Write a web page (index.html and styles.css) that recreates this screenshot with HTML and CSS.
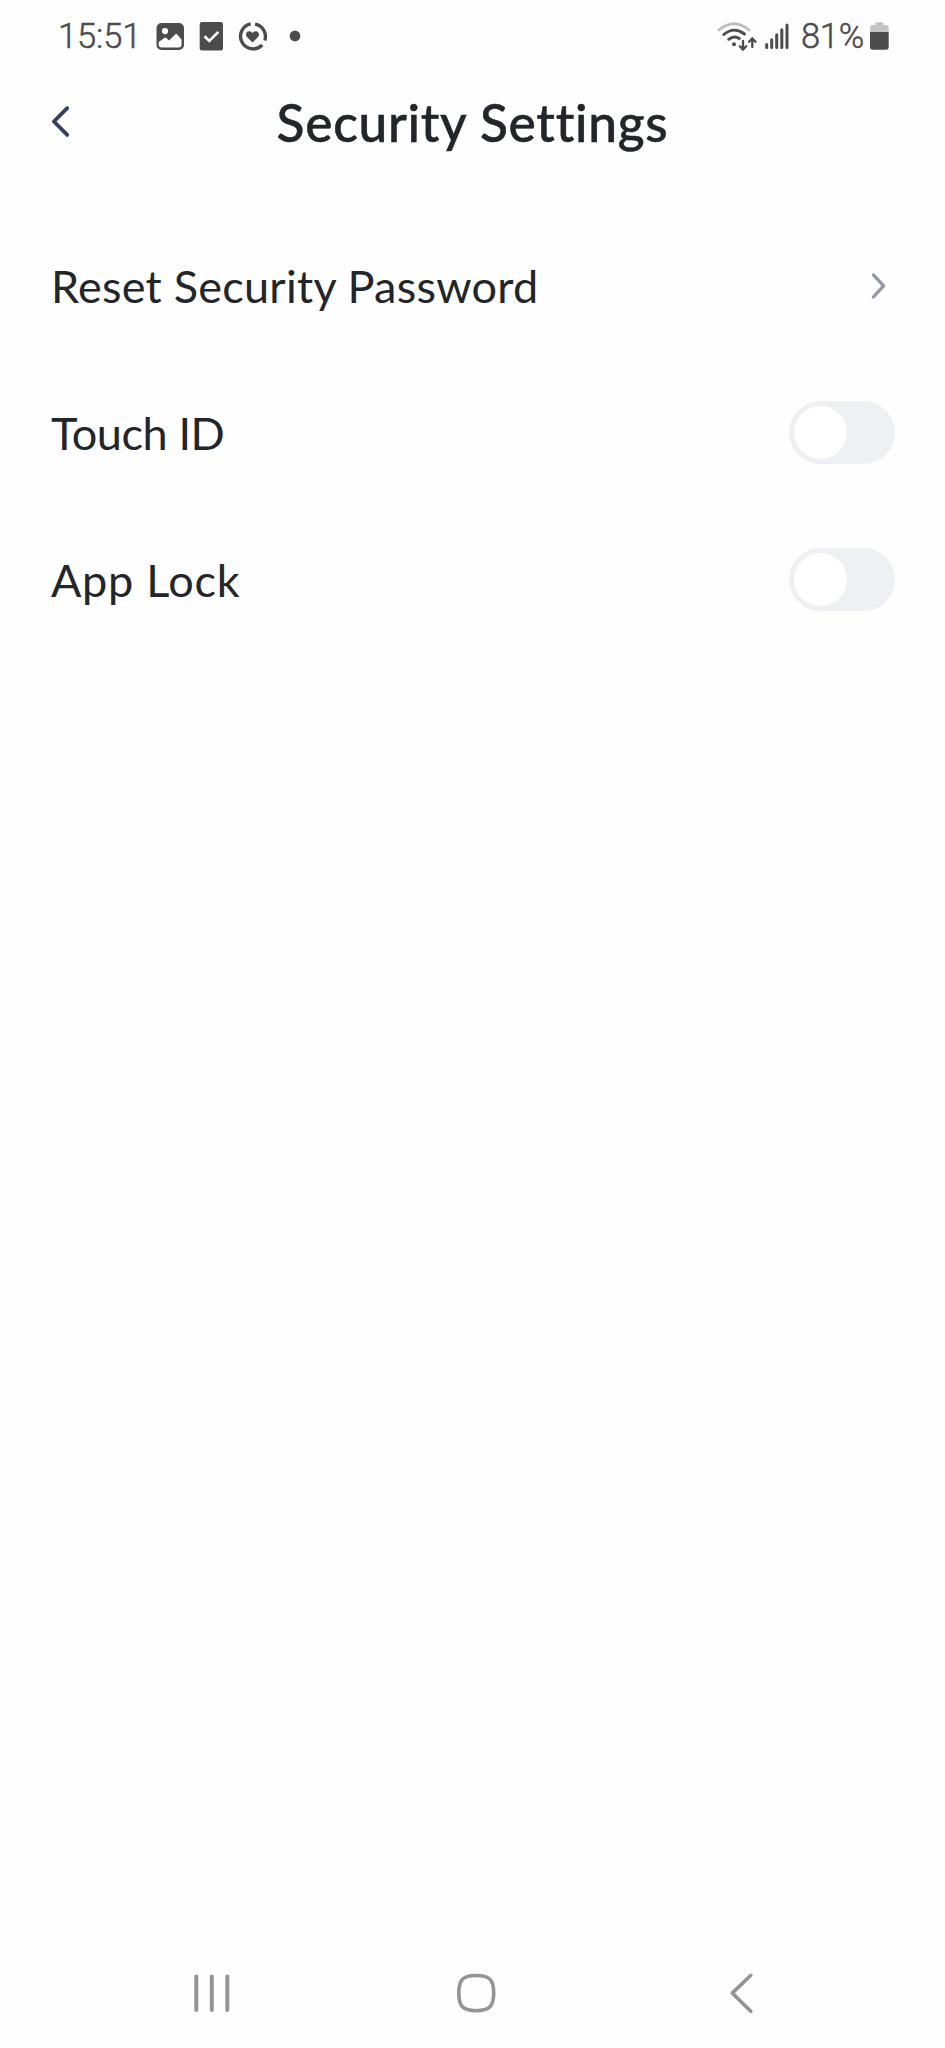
FILE: index.html
```html
<!DOCTYPE html>
<html lang="en">
<head>
<meta charset="utf-8">
<title>Security Settings</title>
<link rel="stylesheet" href="styles.css">
</head>
<body>
<div class="screen">
  <div class="status">
    <div class="status-side">
      <span class="time">15:51</span>
      <svg class="notifications" width="146" height="32" viewBox="156 20 146 32">
        <path fill="#4c4c4c" fill-rule="evenodd" d="M161.500 23H179a5 5 0 0 1 5 5V45a5 5 0 0 1-5 5H161.500a5 5 0 0 1-5-5V28a5 5 0 0 1 5-5ZM158.700 42V44.500q0 3 3 3H178.500q3 0 3-3V39.500L177 34.300q-.8-.8-1.600 0L169.200 40.600 166.200 37.900q-.9-.8-1.800 0ZM165 28a3.100 3.100 0 1 0 0 6.200 3.100 3.100 0 1 0 0-6.200Z"/>
        <rect x="199.700" y="22" width="23.300" height="28.500" rx="2.200" fill="#4c4c4c"/>
        <path d="M204.500 36.300L209.300 40.900 218.300 31.900" fill="none" stroke="#fff" stroke-width="2.700"/>
        <g fill="none" stroke="#4c4c4c" stroke-width="3.400">
          <path d="M250.700 23.900A12.600 12.600 0 1 0 262.200 45"/>
          <path d="M255.100 24.100A12.600 12.600 0 0 1 264.800 40.500"/>
        </g>
        <path fill="#4c4c4c" d="M252.500 42.600L247.200 37.300C244.900 34.800 246.300 31.500 249 31.300Q251.300 31.100 252.500 33Q253.700 31.100 256 31.300C258.700 31.500 260.100 34.800 257.800 37.300Z"/>
        <circle cx="295" cy="36" r="5.400" fill="#4c4c4c"/>
      </svg>
    </div>
    <div class="status-side">
      <svg width="75" height="32" viewBox="715 20 75 32" fill="none" stroke="#4c4c4c" stroke-linecap="round">
        <path d="M718 30Q733 17.500 748 30" stroke="#bdbdbd" stroke-width="2.700"/>
        <path d="M722.800 34.500Q733 26 743.500 34" stroke-width="2.900"/>
        <path d="M727.700 39.300Q733 35 738.300 38.500" stroke-width="2.900"/>
        <circle cx="733" cy="44.200" r="2" fill="#4c4c4c" stroke="none"/>
        <path d="M742 41V49.300M738.800 46.300L742 49.500 745.200 46.300M751.300 47V38.700M748.100 41.700L751.300 38.500 754.500 41.700" stroke-width="2.300"/>
        <path d="M765.700 44.500V47.500M770.700 39.700V47.500M775.700 34.700V47.500M780.800 29.700V47.500M786 25V47.500" stroke-width="3"/>
      </svg>
      <span class="percent">81%</span>
      <svg width="20" height="32" viewBox="869 20 20 32">
        <path fill="#c4c4c4" d="M869 33V27.500Q869 25 871.500 25H874.300V23.500Q874.300 22.200 875.600 22.200H881Q882.300 22.200 882.300 23.500V25H885.200Q887.700 25 887.700 27.500V33Z"/>
        <path fill="#4c4c4c" d="M869 32H887.700V47Q887.700 49.700 885 49.700H871.700Q869 49.700 869 47Z"/>
      </svg>
    </div>
  </div>

  <header class="header">
    <svg class="back" width="22" height="34" viewBox="50 105 22 34" fill="none" stroke="#333e60" stroke-width="3.800" stroke-linecap="round" stroke-linejoin="round">
      <path d="M67.200 108.200L53.900 121.500 67.200 134.900"/>
    </svg>
    <h1 class="title">Security Settings</h1>
  </header>

  <main class="list">
    <div class="row">
      <span class="label label-reset">Reset Security Password</span>
      <svg class="chevron" width="16" height="30" viewBox="870 270.500 16 30" fill="none" stroke="#9299a3" stroke-width="3.300" stroke-linecap="round" stroke-linejoin="round">
        <path d="M872.400 274.400L882.600 285.400 872.400 296.500"/>
      </svg>
    </div>
    <div class="row">
      <span class="label label-touch">Touch ID</span>
      <span class="toggle"><span class="knob"></span></span>
    </div>
    <div class="row">
      <span class="label label-lock">App Lock</span>
      <span class="toggle"><span class="knob"></span></span>
    </div>
  </main>

  <nav class="nav">
    <svg width="40" height="44" viewBox="192 1970.500 40 44" fill="none" stroke="#949494" stroke-width="4" stroke-linecap="round">
      <path d="M196.300 1976V2009.500M211.800 1976V2009.500M227.300 1976V2009.500"/>
    </svg>
    <svg class="home" width="44" height="44" viewBox="454 1970.500 44 44" fill="none" stroke="#949494" stroke-width="3.600">
      <path d="M476.200 1975C489.500 1975 493.700 1979.200 493.700 1992.500S489.500 2010.200 476.200 2010.200 458.800 2005.800 458.800 1992.500 462.900 1975 476.200 1975Z"/>
    </svg>
    <svg width="30" height="44" viewBox="727 1970.500 30 44" fill="none" stroke="#949494" stroke-width="3.600" stroke-linecap="round" stroke-linejoin="round">
      <path d="M750.800 1974.800L732.300 1992.600 750.800 2010.800"/>
    </svg>
  </nav>
</div>
</body>
</html>
```
FILE: styles.css
```css
* { box-sizing: border-box; }
body { margin: 0; background: #fefefe; }
.screen {
  width: 945px;
  height: 2048px;
  display: flex;
  flex-direction: column;
  font-family: Lato, "Open Sans", sans-serif;
  font-variant-ligatures: none;
  color: #22262a;
}
svg { display: block; flex: none; }
.status {
  height: 72px;
  display: flex;
  justify-content: space-between;
  padding: 0 55px 0 58px;
  font-family: Roboto, sans-serif;
  font-size: 34.5px;
  font-weight: 300;
  -webkit-text-stroke: 0.5px #4c4c4c;
  line-height: 72px;
  color: #4c4c4c;
}
.status-side { display: flex; align-items: center; }
.time { width: 98px; letter-spacing: -0.1px; }
.percent { width: 69px; margin-left: 10px; letter-spacing: -0.3px; }
.header {
  height: 100px;
  display: grid;
  grid-template-columns: 22px 1fr 22px;
  align-items: center;
  padding: 0 50px;
}
.title {
  margin: 0;
  padding-top: 1px;
  text-align: center;
  font-size: 51.5px;
  font-weight: 500;
  -webkit-text-stroke: 0.5px #22262a;
  letter-spacing: 0.7px;
  line-height: 99px;
  white-space: nowrap;
}
.list { margin-top: 40px; flex: 1; }
.row {
  height: 147px;
  display: flex;
  align-items: center;
  justify-content: space-between;
  padding: 0 50px 0 51px;
}
.label { font-size: 45px; white-space: nowrap; }
.label-reset { letter-spacing: 0.25px; }
.label-touch { letter-spacing: -0.4px; }
.label-lock { letter-spacing: 0.7px; }
.chevron { margin-right: 8px; }
.toggle {
  width: 106px;
  height: 63px;
  border-radius: 32px;
  background: #eef0f4;
  padding: 5px;
}
.knob {
  display: block;
  width: 53px;
  height: 53px;
  border-radius: 50%;
  background: #fff;
}
.nav {
  height: 111px;
  display: flex;
  justify-content: space-between;
  align-items: center;
  padding: 0 188px 0 192px;
}
.home { margin-right: 7px; }
```
